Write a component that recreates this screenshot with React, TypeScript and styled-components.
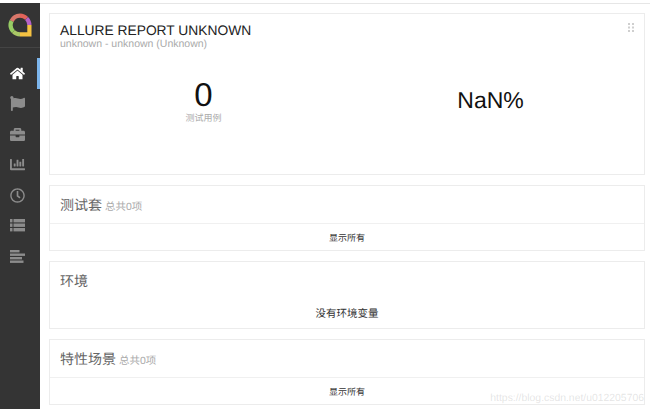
import React from 'react';
import styled, { createGlobalStyle } from 'styled-components';
import { FaHome, FaFlag, FaBriefcase, FaChartBar, FaRegClock } from 'react-icons/fa';

const GlobalStyle = createGlobalStyle`
  html, body {
    margin: 0;
    padding: 0;
    background: #fff;
    overflow: hidden;
  }
  body {
    font-family: "Liberation Sans", "Noto Sans CJK SC", Arial, sans-serif;
    text-rendering: geometricPrecision;
  }
`;

const Page = styled.div`
  display: flex;
  width: 650px;
  height: 409px;
  overflow: hidden;
  position: relative;
  box-sizing: border-box;
  padding-top: 3px;
`;

const Sidebar = styled.nav`
  width: 40px;
  flex-shrink: 0;
  background: #343434;
  display: flex;
  flex-direction: column;
`;

const LogoBox = styled.div`
  height: 45px;
  box-sizing: border-box;
  display: flex;
  align-items: center;
  justify-content: center;
  border-bottom: 1px solid #444;
  margin-bottom: 10px;
`;

const NavItem = styled.div<{ $active?: boolean }>`
  height: 30.5px;
  flex-shrink: 0;
  display: flex;
  align-items: center;
  justify-content: center;
  box-sizing: border-box;
  padding-right: 3px;
  color: ${({ $active }) => ($active ? '#ffffff' : '#8c8c8c')};
  border-right: 3px solid ${({ $active }) => ($active ? '#7cb5ec' : 'transparent')};
`;

const Main = styled.main`
  flex: 1;
  min-width: 0;
  box-sizing: border-box;
  border-top: 1px solid #e6e6e6;
  padding: 9px 5px 0 9px;
  display: flex;
  flex-direction: column;
  gap: 10px;
`;

const Card = styled.section<{ $height: number }>`
  position: relative;
  height: ${({ $height }) => $height}px;
  flex-shrink: 0;
  box-sizing: border-box;
  border: 1px solid #ececec;
  background: #fff;
  display: flex;
  flex-direction: column;
`;

const Header = styled.div`
  padding: 9px 10px 0;
  height: 37px;
  box-sizing: border-box;
  display: flex;
  align-items: baseline;
  gap: 3px;
`;

const Title = styled.h2`
  margin: 0;
  font-size: 14px;
  line-height: 20px;
  font-weight: 400;
  color: #666;
`;

const Count = styled.span`
  font-size: 10.5px;
  color: #aaa;
`;

const Footer = styled.div`
  flex: 1;
  border-top: 1px solid #f0f0f0;
  display: flex;
  align-items: center;
  justify-content: center;
  font-size: 9px;
  color: #333;
`;

const ReportHead = styled.div`
  padding: 9px 10px 0;
`;

const ReportTitle = styled.h1`
  margin: 0;
  font-size: 13.8px;
  line-height: 16px;
  font-weight: 400;
  color: #222;
`;

const ReportSub = styled.div`
  font-size: 10.5px;
  line-height: 11px;
  color: #aaa;
`;

const Stats = styled.div`
  display: grid;
  grid-template-columns: 1fr 1fr;
  padding: 0 10px;
  margin-top: 26px;
`;

const Stat = styled.div`
  display: flex;
  flex-direction: column;
  align-items: center;
`;

const BigNumber = styled.div`
  font-size: 33px;
  line-height: 37px;
  color: #111;
`;

const StatLabel = styled.div`
  font-size: 9px;
  line-height: 11px;
  color: #aaa;
`;

const Percent = styled.div`
  font-size: 23px;
  line-height: 38px;
  margin-top: 5px;
  color: #111;
`;

const Handle = styled.svg`
  position: absolute;
  top: 9px;
  right: 10px;
`;

const EnvBody = styled.div`
  text-align: center;
  font-size: 10.5px;
  line-height: 14px;
  color: #333;
  margin-top: 8px;
`;

const Watermark = styled.div`
  position: absolute;
  right: 6px;
  bottom: 5px;
  font-size: 10.4px;
  color: rgba(150, 150, 150, 0.26);
`;

function Logo(): JSX.Element {
  return (
    <svg width="24" height="24" viewBox="0 0 24 24" fill="none" strokeWidth="4.2">
      <path d="M12 2.6A9.4 9.4 0 0 0 3.6 8" stroke="#d9776a" />
      <path d="M3.6 8A9.4 9.4 0 0 0 5.4 18.6" stroke="#97cc64" />
      <path d="M5.4 18.6A9.4 9.4 0 0 0 12 21.4" stroke="#a9c765" />
      <path d="M12 2.6A9.4 9.4 0 0 1 18.6 5.4" stroke="#e2635a" />
      <path d="M18.6 5.4A9.4 9.4 0 0 1 21.4 12" stroke="#b562c8" />
      <path d="M12 21.4H21.4V12" stroke="#f5c242" />
    </svg>
  );
}

function DragHandle(): JSX.Element {
  return (
    <Handle width="6" height="9" viewBox="0 0 6 9" fill="#cfcfcf">
      {[0, 3.5, 7].map((y) => (
        <React.Fragment key={y}>
          <rect x="0" y={y} width="2" height="2" />
          <rect x="4" y={y} width="2" height="2" />
        </React.Fragment>
      ))}
    </Handle>
  );
}

// FA4 style list, squares and long bars nearly touching
function ListIcon(): JSX.Element {
  return (
    <svg width="15" height="13" viewBox="0 0 15 13" fill="currentColor">
      {[0, 4.5, 9].map((y) => (
        <React.Fragment key={y}>
          <rect x="0" y={y} width="2.5" height="3.4" />
          <rect x="3.5" y={y} width="11.5" height="3.4" />
        </React.Fragment>
      ))}
    </svg>
  );
}

function AlignIcon(): JSX.Element {
  return (
    <svg width="15" height="13" viewBox="0 0 15 13" fill="currentColor">
      <rect x="0" y="0" width="9.5" height="2.4" />
      <rect x="0" y="3.5" width="15" height="2.4" />
      <rect x="0" y="7" width="12" height="2.4" />
      <rect x="0" y="10.5" width="13.5" height="2.4" />
    </svg>
  );
}

const navIcons = [
  <FaHome size={15} />,
  <FaFlag size={15} />,
  <FaBriefcase size={15} />,
  <FaChartBar size={15} />,
  <FaRegClock size={15} />,
  <ListIcon />,
  <AlignIcon />,
];

function App(): JSX.Element {
  return (
    <Page>
      <GlobalStyle />
      <Sidebar>
        <LogoBox>
          <Logo />
        </LogoBox>
        {navIcons.map((icon, index) => (
          <NavItem key={index} $active={index === 0}>
            {icon}
          </NavItem>
        ))}
      </Sidebar>
      <Main>
        <Card $height={162}>
          <ReportHead>
            <ReportTitle>ALLURE REPORT UNKNOWN</ReportTitle>
            <ReportSub>unknown - unknown (Unknown)</ReportSub>
          </ReportHead>
          <DragHandle />
          <Stats>
            <Stat>
              <BigNumber>0</BigNumber>
              <StatLabel>测试用例</StatLabel>
            </Stat>
            <Stat>
              <Percent>NaN%</Percent>
            </Stat>
          </Stats>
        </Card>
        <Card $height={66}>
          <Header>
            <Title>测试套</Title>
            <Count>总共0项</Count>
          </Header>
          <Footer>显示所有</Footer>
        </Card>
        <Card $height={68}>
          <Header>
            <Title>环境</Title>
          </Header>
          <EnvBody>没有环境变量</EnvBody>
        </Card>
        <Card $height={66}>
          <Header>
            <Title>特性场景</Title>
            <Count>总共0项</Count>
          </Header>
          <Footer>显示所有</Footer>
        </Card>
      </Main>
      <Watermark>https://blog.csdn.net/u012205706</Watermark>
    </Page>
  );
}

export default App;
